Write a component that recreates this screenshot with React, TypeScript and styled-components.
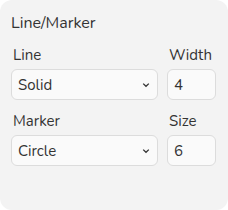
import React from "react";
import styled, { createGlobalStyle } from "styled-components";

const Global = createGlobalStyle`
  html, body { margin: 0; padding: 0; background: #ffffff; }
  body { font-family: Nunito, "Nunito Sans", Lato, "Open Sans", sans-serif; color: #333; }
`;

const Panel = styled.div`
  width: 228px;
  height: 210px;
  box-sizing: border-box;
  background: #f3f3f3;
  border-radius: 12px;
  padding: 13px 12px 0 11px;
`;

const Title = styled.div`
  font-size: 16px;
  line-height: 20px;
  color: #333;
`;

const Grid = styled.div`
  display: grid;
  grid-template-columns: 147px 49px;
  column-gap: 9px;
  margin-top: 8px;
`;

const Label = styled.div`
  box-sizing: border-box;
  font-size: 15px;
  line-height: 20px;
  padding: 4px 0 0 2px;
  height: 28px;
  color: #333;
`;

const Field = styled.div`
  box-sizing: border-box;
  height: 31px;
  border: 1px solid #dcdcdc;
  border-radius: 6px;
  background: #fafafa;
  display: flex;
  align-items: center;
  padding: 0 7px 0 6px;
  font-size: 15px;
  color: #333;
  margin-bottom: 7px;
`;

const Value = styled.span`
  flex: 1;
`;

const Chevron = () => (
  <svg width="8" height="6" viewBox="0 0 8 6">
    <path d="M1.2 1.6 L4 4.3 L6.8 1.6" stroke="#333" strokeWidth="1.3" fill="none" />
  </svg>
);

export default function App() {
  return (
    <>
      <Global />
      <Panel>
        <Title>Line/Marker</Title>
        <Grid>
          <Label>Line</Label>
          <Label>Width</Label>
          <Field>
            <Value>Solid</Value>
            <Chevron />
          </Field>
          <Field>
            <Value>4</Value>
          </Field>
          <Label>Marker</Label>
          <Label>Size</Label>
          <Field>
            <Value>Circle</Value>
            <Chevron />
          </Field>
          <Field>
            <Value>6</Value>
          </Field>
        </Grid>
      </Panel>
    </>
  );
}
